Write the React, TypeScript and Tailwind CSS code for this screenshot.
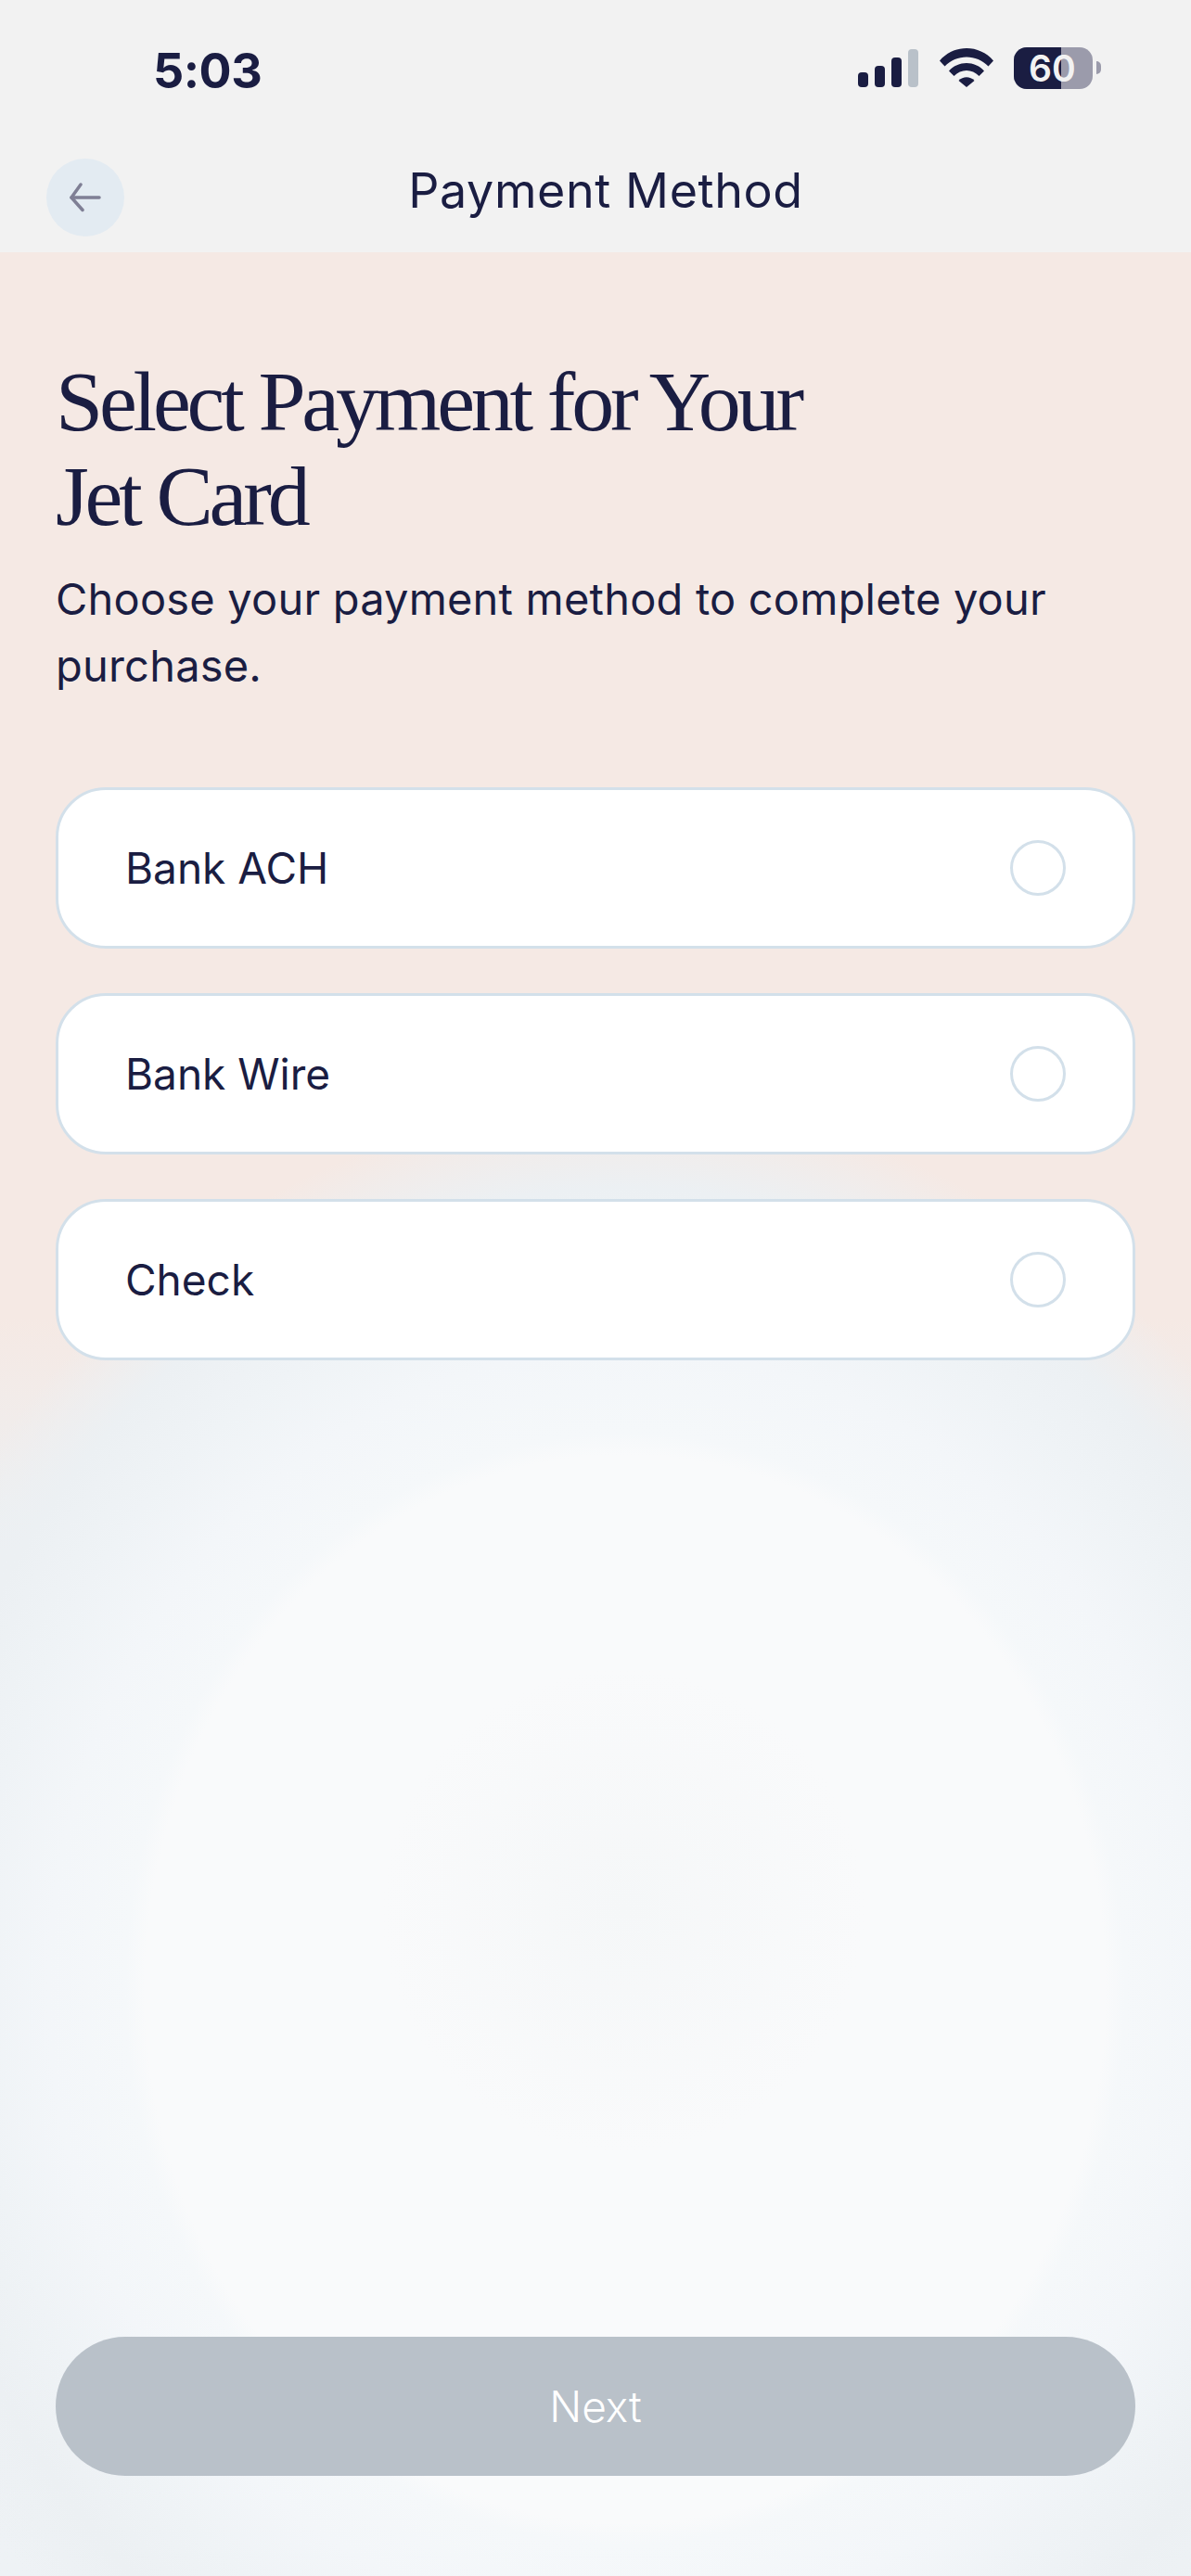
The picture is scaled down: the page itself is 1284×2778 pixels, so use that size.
const methods = ['Bank ACH', 'Bank Wire', 'Check']

function StatusBar() {
  return (
    <div className="flex h-[150px] items-start justify-between pl-[165px] pr-[97px] pt-[46px]">
      <span className="font-['Inter',sans-serif] text-[52px] font-bold leading-[62px] tracking-[-0.5px] text-[#1a1d42]">
        5:03
      </span>
      <div className="flex items-start pt-[7px]">
        {/* Signal */}
        <div className="flex h-[41px] items-end gap-[7px]">
          <div className="h-[16px] w-[11px] rounded-[4px] bg-[#1a1d42]" />
          <div className="h-[23px] w-[11px] rounded-[4px] bg-[#1a1d42]" />
          <div className="h-[32px] w-[11px] rounded-[4px] bg-[#1a1d42]" />
          <div className="h-[41px] w-[11px] rounded-[4px] bg-[#b9c1c9]" />
        </div>
        {/* Wifi */}
        <svg className="ml-[23px] mt-[-1px]" width="58" height="42" viewBox="0 0 58 42" fill="#1a1d42">
          <path d="M0 13.5C15-4.500 43-4.500 58 13.500L52.500 19.500C40 6 18 6 5.500 19.500Z" />
          <path d="M10 24.500C20 13 38 13 48 24.500L42.500 30C35 22 23 22 15.500 30Z" />
          <path d="M20.500 35C25 30 33 30 37.500 35L29 42Z" />
        </svg>
        {/* Battery */}
        <div className="relative ml-[22px] mt-[-2px] h-[45px] w-[85px]">
          <div className="flex h-full w-full overflow-hidden rounded-[14px] bg-[#9b9bab]">
            <div className="h-full w-[51px] bg-[#1a1d42]" />
          </div>
          <span className="absolute left-[16px] top-0 font-['Inter',sans-serif] text-[39px] font-semibold leading-[45px] text-[#f2f2f2]">
            60
          </span>
        </div>
        <div className="ml-[4px] mt-[13px] h-[14px] w-[5px] rounded-r-full bg-[#9b9bab]" />
      </div>
    </div>
  )
}

function NavBar() {
  return (
    <div className="flex h-[122px] items-start pl-[50px] pr-[112px] pt-[21px]">
      <button className="flex h-[84px] w-[84px] items-center justify-center rounded-full bg-[#e3ebf2]">
        <svg width="34" height="32" viewBox="0 0 34 32" fill="none" stroke="#7f7f95" strokeWidth="3.500" strokeLinecap="round" strokeLinejoin="round">
          <path d="M32 16H2" />
          <path d="M12 2 2 16l12 13.500" />
        </svg>
      </button>
      <h1 className="flex-1 pt-[5px] text-center font-['Inter',sans-serif] text-[52px] font-normal leading-[60px] tracking-[0.6px] text-[#1a1d42]">
        Payment Method
      </h1>
    </div>
  )
}

function MethodRow({ label }: { label: string }) {
  return (
    <div className="flex h-[174px] items-center justify-between rounded-[54px] border-[3px] border-[#d3e0ea] bg-white pl-[72px] pr-[72px]">
      <span className="font-['Inter',sans-serif] text-[46px] leading-[56px] text-[#1a1d42]">{label}</span>
      <div className="h-[60px] w-[60px] rounded-full border-[3px] border-[#d3e0ea]" />
    </div>
  )
}

export default function App() {
  return (
    <div className="flex min-h-[2778px] w-[1284px] flex-col bg-[#f2f2f2]">
      <StatusBar />
      <NavBar />

      <main className="flex h-[2506px] flex-col bg-[radial-gradient(circle_260px_at_672px_1788px,#f5f7f8,#f5f7f800),radial-gradient(518px_576px_at_674px_1873px,#f9fafb_0%,#f9fafb_100%,#f5f8fa_104%,#f3f6f9_120%,#eff3f6_135%,#ecf0f3_150%,#ecf0f300_166%),linear-gradient(#f5e9e4_0px,#f5e9e4_1150px,#ecf0f3_1400px,#eef2f5_2506px)] px-[60px] pt-[110px]">
        <h2 className="font-['Liberation_Serif',serif] text-[92px] font-normal leading-[102px] tracking-[-4.200px] text-[#1a1d42]">
          Select Payment for Your
          <br />
          Jet Card
        </h2>
        <p className="mt-[24px] font-['Inter',sans-serif] text-[47px] leading-[72px] tracking-[0.2px] text-[#1a1d42]">
          Choose your payment method to complete your purchase.
        </p>

        <div className="mt-[95px] flex flex-col gap-[48px]">
          {methods.map(m => (
            <MethodRow key={m} label={m} />
          ))}
        </div>

        <button className="mt-auto mb-[108px] h-[150px] w-full rounded-full bg-[#b9c1c9] font-['Inter',sans-serif] text-[46px] font-light text-white">
          Next
        </button>
      </main>
    </div>
  )
}
